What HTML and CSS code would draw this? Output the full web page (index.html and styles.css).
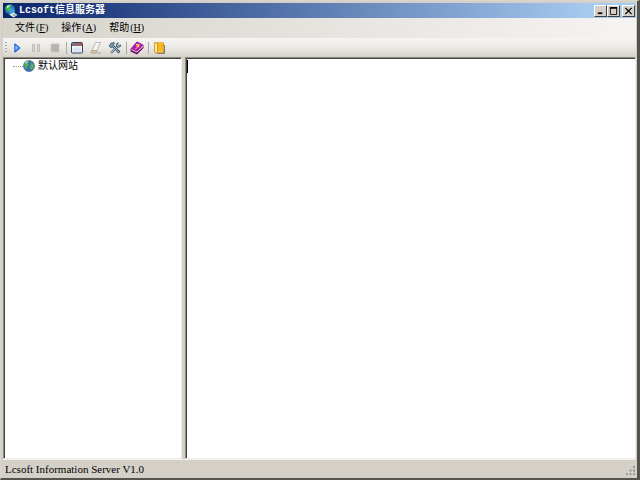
FILE: index.html
```html
<!DOCTYPE html>
<html lang="zh-CN">
<head>
<meta charset="utf-8">
<title>Lcsoft信息服务器</title>
<link rel="stylesheet" href="styles.css">
</head>
<body>
<div class="window">
  <header class="titlebar">
    <svg class="app-icon" viewBox="0 0 14 14" aria-hidden="true">
      <circle cx="6" cy="5.500" r="5" fill="#2878b8"/>
      <path d="M1 4C2 1 5 0 8 1L6 3 8 5 5 8 3 6z" fill="#48b850"/>
      <path d="M3 2l3-1-1 2-2 1z" fill="#d8f4e0"/>
      <path d="M5 7l3-3 3 3-1 3-3 1z" fill="#3e9ddc"/>
      <path d="M5 10.500l5-2 3.500 2.500-4 2.500z" fill="#d8e4ee"/>
      <path d="M9 10l3 1-2 1z" fill="#4b9b58"/>
    </svg>
    <h1 class="title">Lcsoft信息服务器</h1>
    <div class="controls">
      <button class="control" type="button" aria-label="最小化"><svg viewBox="0 0 10 9"><path d="M2 7h5" stroke="#000" stroke-width="2"/></svg></button>
      <button class="control" type="button" aria-label="最大化"><svg viewBox="0 0 10 9"><path d="M1.500 1v7.500h7V1" fill="none" stroke="#000"/><path d="M1 1h8" stroke="#000" stroke-width="2"/></svg></button>
      <button class="control control-close" type="button" aria-label="关闭"><svg viewBox="0 0 10 9"><path d="M1.500 1l7 7M8.500 1l-7 7" stroke="#000" stroke-width="1.500"/></svg></button>
    </div>
  </header>
  <nav class="menubar">
    <button class="menu" type="button">文件<span class="key">(<u>F</u>)</span></button>
    <button class="menu" type="button">操作<span class="key">(<u>A</u>)</span></button>
    <button class="menu" type="button">帮助<span class="key">(<u>H</u>)</span></button>
  </nav>
  <div class="toolbar" role="toolbar">
    <span class="grip"></span>
    <button class="tool" type="button" aria-label="启动"><svg viewBox="0 0 14 14"><path d="M4.500 2v10L10.500 7z" fill="#3c83ee"/><path d="M5 3v8L10 7z" fill="#4f96f4" stroke="#1e5fd4"/><path d="M5.500 4.500v4l2.500-2z" fill="#8cc2fc"/></svg></button>
    <button class="tool" type="button" aria-label="暂停"><svg viewBox="0 0 14 14"><path d="M3.500 3.500h2v7h-2zM8.500 3.500h2v7h-2z" fill="#dddbd7" stroke="#bcbab6"/></svg></button>
    <button class="tool" type="button" aria-label="停止"><svg viewBox="0 0 14 14"><path d="M3 3h8v8H3z" fill="#b4b2af" stroke="#cbc9c5"/></svg></button>
    <span class="separator"></span>
    <button class="tool" type="button" aria-label="窗口"><svg viewBox="0 0 14 14"><rect x="1.500" y="1.500" width="11" height="10.500" rx="1" fill="#eef3fa" stroke="#34425c"/><path d="M2 3.500h10" stroke="#66768f" stroke-width="3"/><path d="M4.500 3.500h2M7.500 3.500h1.500M10 3.500h1.500" stroke="#f04830" stroke-width="2"/><path d="M3 6.500h8V11H3z" fill="#dce4ef"/></svg></button>
    <button class="tool" type="button" aria-label="清除"><svg viewBox="0 0 14 14"><path d="M6.500 1.500h5L8 9.500H3z" fill="#f7f5f2" stroke="#bdb4ab"/><path d="M3 9.500h5l-1 2.500H2z" fill="#dac9bd" stroke="#b49e90"/><path d="M8 12h4" stroke="#a9a29b"/></svg></button>
    <button class="tool" type="button" aria-label="设置"><svg viewBox="0 0 14 14"><path d="M5 5l6.500 6.500" stroke="#36536e" stroke-width="2.500"/><path d="M5 5l6 6" stroke="#b5cad9"/><path d="M10 5l-7 7" stroke="#435f76" stroke-width="2"/><path d="M9.500 5.500L3 12" stroke="#d0dfe8" stroke-width=".8"/><path d="M1 5l2-3 3-.5 1 1-2 1v2L3 7z" fill="#7894aa" stroke="#36536e" stroke-width=".7"/><path d="M10 1.500L8.500 3v2l1.500 1h2l1-2-2 .5-1-1z" fill="#a9bdca" stroke="#36536e" stroke-width=".8"/></svg></button>
    <span class="separator"></span>
    <button class="tool" type="button" aria-label="帮助"><svg viewBox="0 0 14 14"><path d="M.5 8L7 .5l6.500 3.500v3L7 13.500 .5 10.500z" fill="#720b73"/><path d="M1 7.500L7 1l6 3-6 6z" fill="#b914b2"/><path d="M1.500 8L7 10.500l6-6v2L7 12 1.500 9.500z" fill="#f1dfed"/><path d="M1.500 9.500L7 12l6-5.500" fill="none" stroke="#641064"/><path d="M6 3.500l3 .5-.5 1.500-2 .5M5.500 7.500l1 .4" fill="none" stroke="#ffe34c" stroke-width="1.300"/></svg></button>
    <span class="separator"></span>
    <button class="tool" type="button" aria-label="退出"><svg viewBox="0 0 14 14"><path d="M3.500 2h8v10h-8z" fill="#f8d76b" stroke="#bd8d2b"/><path d="M4.500 1.500h7v9h-7z" fill="#f7b923"/><path d="M2.500 1.500l3 1v10l-3-1.500z" fill="#ffe99a" stroke="#c48b18" stroke-width=".8"/><path d="M6 12.500h6.500V4" fill="none" stroke="#7b7b80"/></svg></button>
  </div>
  <main class="panes">
    <section class="pane tree" aria-label="网站">
      <ul class="tree-list">
        <li class="tree-item"><span class="branch"></span><svg class="globe" viewBox="0 0 12 12" aria-hidden="true"><circle cx="6" cy="6" r="5.500" fill="#3775b5" stroke="#35567b" stroke-width=".6"/><path d="M1 5l2-4 3 0-1 2 1 2-2 1v3L2 8zM8 2l3 3-1 4-2 1-1-3 1-2z" fill="#5dad52"/><path d="M3 2l2-1-1 2-2 1z" fill="#c8e9e8"/></svg><span>默认网站</span></li>
      </ul>
    </section>
    <section class="pane editor">
      <textarea class="log" aria-label="信息" spellcheck="false"></textarea>
      <span class="caret"></span>
    </section>
  </main>
  <footer class="statusbar">
    <span>Lcsoft Information Server V1.0</span>
    <svg class="resize" viewBox="0 0 10 10" aria-hidden="true"><path d="M8 0h2v2H8zM4 4h2v2H4zM8 4h2v2H8zM0 8h2v2H0zM4 8h2v2H4zM8 8h2v2H8z" fill="#918d85"/></svg>
  </footer>
</div>
</body>
</html>
```
FILE: styles.css
```css
* { box-sizing: border-box; }

body {
  margin: 0;
  color: #000;
  font: 10px/14px "Liberation Serif", "Noto Sans CJK SC", serif;
}

button {
  padding: 0;
  border: 0;
  background: none;
  color: inherit;
  font: inherit;
}

svg { display: block; }

.window {
  display: flex;
  flex-direction: column;
  height: 100vh;
  padding: 2px 1px 0 2px;
  background: #d4d0c8;
  border: solid #d9d6cf;
  border-width: 1px 3px 2px 1px;
  border-right-color: #55534f;
  border-bottom-color: #55534f;
}

.titlebar {
  display: flex;
  align-items: center;
  flex: none;
  height: 15px;
  padding: 0 1px;
  background: linear-gradient(to right, #0a246a, #a6caf0 93%);
}

.app-icon { width: 14px; height: 14px; }

.title {
  flex: 1;
  margin: 0 0 0 1px;
  color: #fff;
  font: bold 10px/14px "Liberation Mono", "Noto Sans CJK SC", monospace;
}

.controls { display: flex; }

.control {
  width: 13px;
  height: 12px;
  padding: 1px;
  background: #d4d0c8;
  border: 1px solid;
  border-color: #fff #404040 #404040 #fff;
}

.control svg { width: 9px; height: 8px; }
.control-close { margin-left: 2px; }

.menubar {
  display: flex;
  align-items: center;
  flex: none;
  gap: 13px;
  height: 20px;
  padding-left: 12px;
  background: linear-gradient(to right, #d6d3cb, #f5f4f2);
}

.key { margin-left: 1px; }

.toolbar {
  display: flex;
  align-items: center;
  flex: none;
  height: 19px;
  padding-left: 2px;
  background: linear-gradient(#f6f5f3, #ebe9e5 50%, #d5d2ca);
}

.grip {
  width: 2px;
  height: 12px;
  margin-right: 1px;
  background: repeating-linear-gradient(#aaa69e 0 1px, transparent 1px 3px);
}

.tool { padding: 0 2px; }
.tool + .tool { margin-left: 1px; }
.tool svg { width: 14px; height: 14px; }

.separator {
  width: 1px;
  height: 12px;
  margin: 0 1px 0 2px;
  background: #aaa79f;
}

.panes {
  display: grid;
  grid-template-columns: 179px 1fr;
  gap: 3px;
  flex: 1;
  min-height: 0;
}

.pane {
  padding: 1px 0 0 1px;
  background: #fff;
  border: 1px solid;
  border-color: #8c8982 #efede8 #efede8 #8c8982;
  box-shadow: inset 1px 1px #454340;
}

.tree-list {
  margin: 0;
  padding: 0 0 0 8px;
  list-style: none;
}

.tree-item {
  display: flex;
  align-items: center;
  height: 14px;
}

.branch { width: 10px; border-top: 1px dotted #999; }
.globe { width: 12px; height: 12px; margin-right: 3px; }

.editor { position: relative; }

.log {
  display: block;
  width: 100%;
  height: 100%;
  padding: 1px;
  background: transparent;
  border: 0;
  outline: 0;
  resize: none;
  font: inherit;
}

.caret {
  position: absolute;
  top: 2px;
  left: 1px;
  height: 13px;
  border-left: 1px solid #000;
}

.statusbar {
  display: flex;
  align-items: center;
  justify-content: space-between;
  flex: none;
  height: 19px;
  padding: 0 1px 0 2px;
  border-top: 1px solid #f4f2ee;
  font-size: 11px;
}

.resize { width: 9px; height: 9px; align-self: flex-end; margin-bottom: 3px; }
```
